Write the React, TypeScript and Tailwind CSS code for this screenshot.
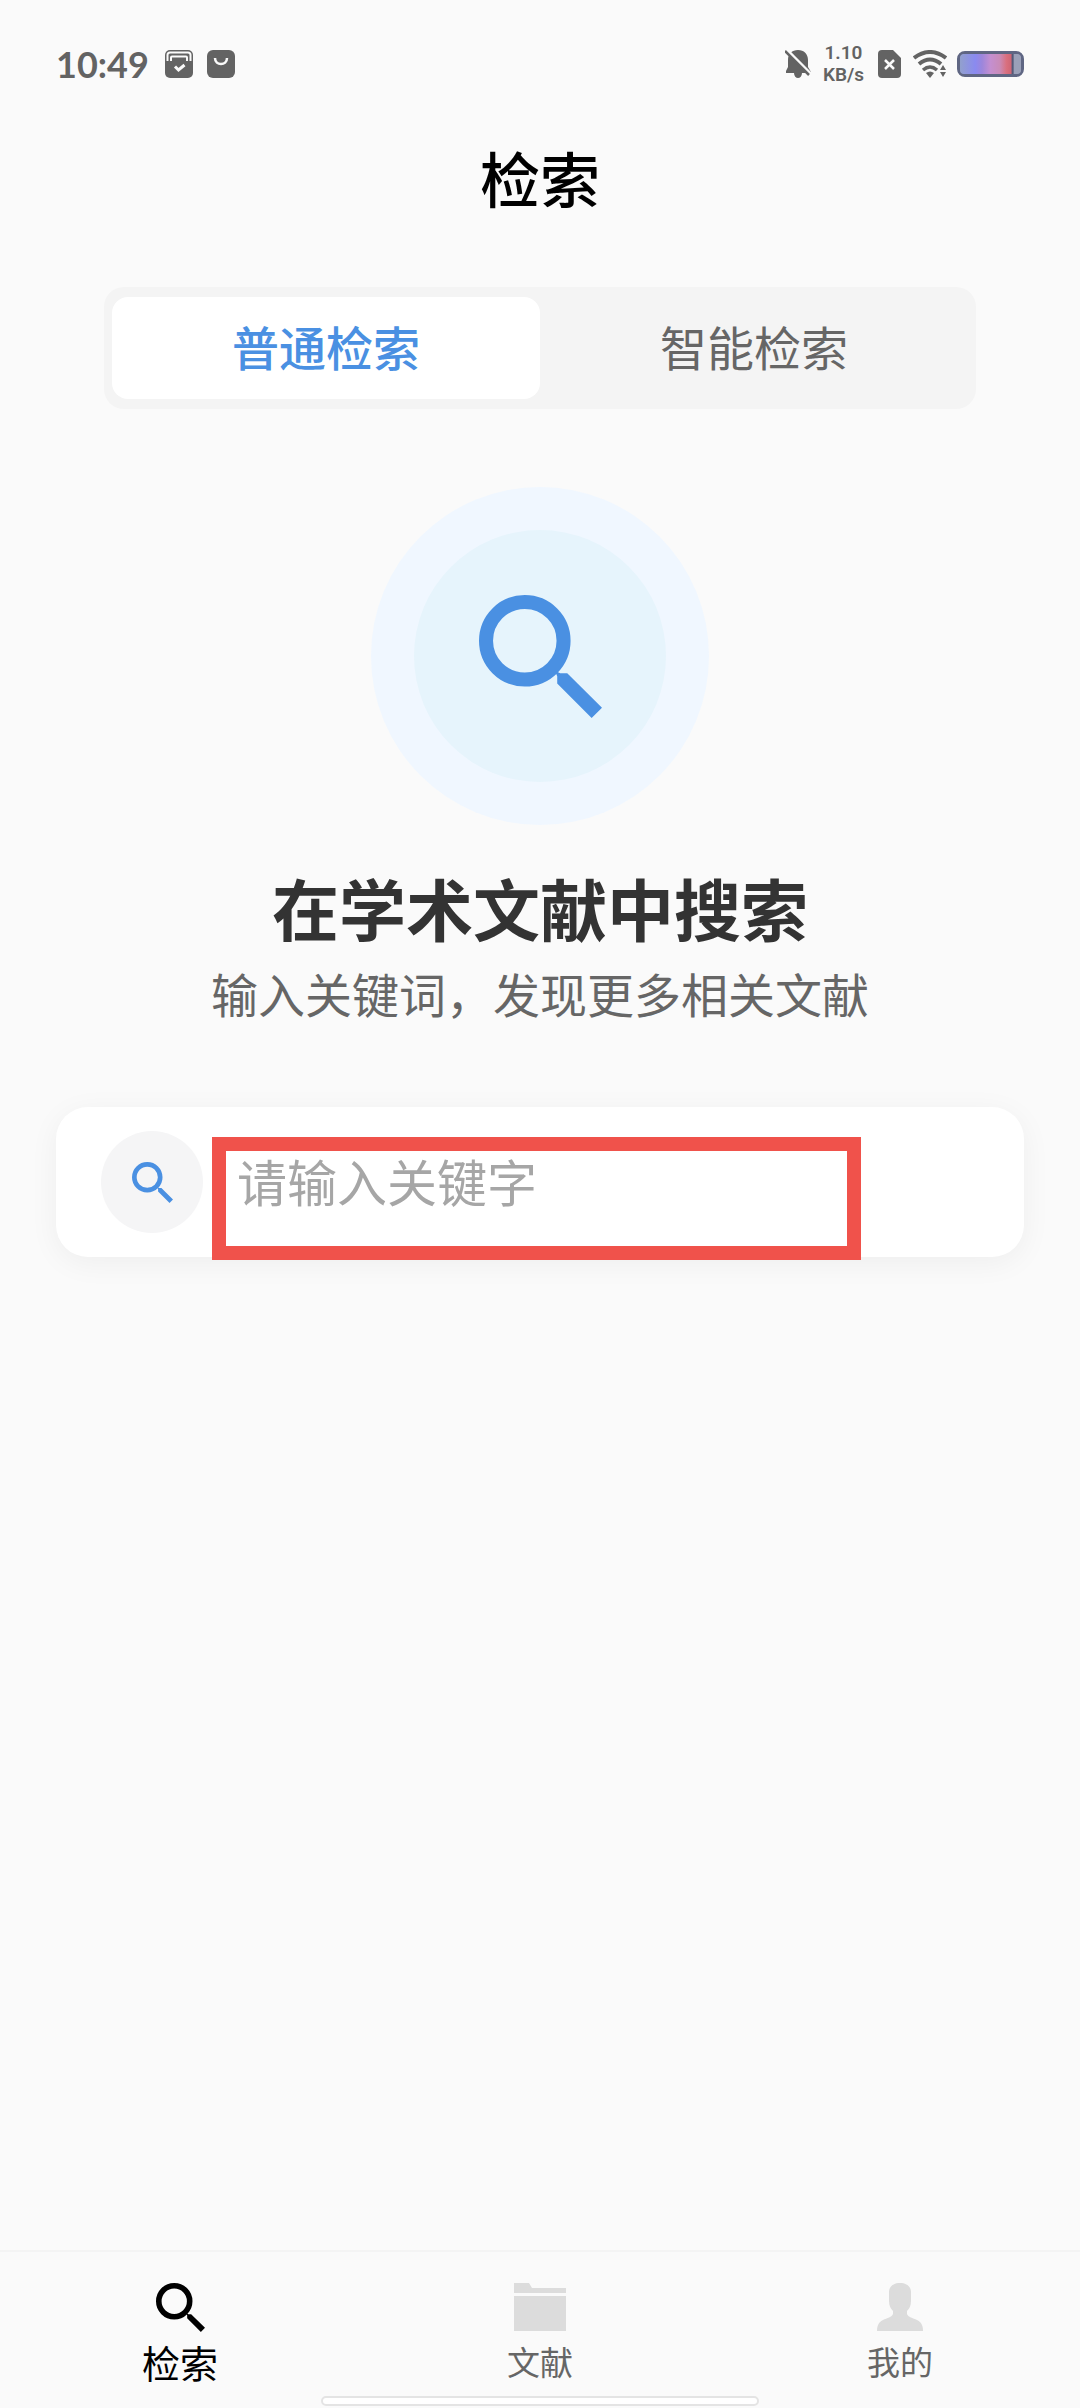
import React, { useState } from "react";

function SearchIcon({ className }: { className?: string }) {
  return (
    <svg viewBox="0 0 368 368" className={className} aria-hidden="true">
      <circle cx="137" cy="137" r="116" fill="none" stroke="currentColor" strokeWidth="42" />
      <path d="M227 227L234 243V265L337 368L368 337L264 234H243Z" fill="currentColor" />
    </svg>
  );
}

function FolderIcon({ className }: { className?: string }) {
  return (
    <svg viewBox="0 0 52 48" className={className} fill="currentColor" aria-hidden="true">
      <path d="M0 0H15L18 5H52V10H0Z" />
      <path d="M0 13H52V48H0Z" />
    </svg>
  );
}

function PersonIcon({ className }: { className?: string }) {
  return (
    <svg viewBox="0 0 46 48" className={className} fill="currentColor" aria-hidden="true">
      <path d="M23 0C30 0 34 4 34 9V18C34 23 32 26 30 28V31C31 34 36 35 40 37C44 39 46 42 46 48H0C0 42 2 39 6 37C10 35 15 34 16 31V28C14 26 12 23 12 18V9C12 4 16 0 23 0Z" />
    </svg>
  );
}

function StatusBar() {
  return (
    <header className="flex h-32 items-center justify-between px-14 text-[#636363]">
      <div className="flex items-center">
        <span className="font-['Lato',sans-serif] text-[36px] leading-10 font-bold">10:49</span>
        <svg viewBox="0 0 28 28" className="ml-4 size-7" aria-hidden="true">
          <rect width="28" height="28" rx="5" fill="currentColor" />
          <path d="M2.5 11V5Q2.500 2.500 5 2.500H23Q25.500 2.500 25.500 5V11" fill="none" stroke="#fafafa" strokeWidth="2" />
          <path d="M6 11V7.500Q6 6.500 7 6.500H21Q22 6.500 22 7.500V11" fill="none" stroke="#fafafa" strokeWidth="2" />
          <path d="M10 16.500L13.500 20L19.500 15" fill="none" stroke="#fafafa" strokeWidth="3" />
        </svg>
        <svg viewBox="0 0 28 28" className="ml-3.5 size-7" aria-hidden="true">
          <rect width="28" height="28" rx="6" fill="currentColor" />
          <path d="M8 8C8 16 20 16 20 8" fill="none" stroke="#fafafa" strokeWidth="2.500" />
        </svg>
      </div>
      <div className="flex items-center">
        <svg viewBox="0 0 26 28" className="h-7 w-[26px]" aria-hidden="true">
          <path d="M13 0C19 0 23 4 23 10V17L26 22V23H17C17 26 15 28 13 28C11 28 9 26 9 23H1V21L3 17V10C3 4 7 0 13 0Z" fill="currentColor" />
          <path d="M2 0L26 24" stroke="#fafafa" strokeWidth="3" />
          <path d="M0 1L24 25" stroke="currentColor" strokeWidth="2.500" />
        </svg>
        <div className="ml-3 flex flex-col items-center font-['Roboto',sans-serif] text-[19px] leading-[22px] font-semibold">
          <span>1.10</span>
          <span>KB/s</span>
        </div>
        <svg viewBox="0 0 23 28" className="ml-3.5 h-7 w-[23px]" aria-hidden="true">
          <path d="M4 0H15L23 8V24Q23 28 19 28H4Q0 28 0 24V4Q0 0 4 0Z" fill="currentColor" />
          <path d="M7 10L16 19M16 10L7 19" stroke="#fafafa" strokeWidth="2.500" />
        </svg>
        <svg viewBox="0 0 34 28" className="ml-3 h-7 w-[34px]" fill="none" stroke="currentColor" aria-hidden="true">
          <path d="M1 8Q17 -4 33 8" strokeWidth="4" />
          <path d="M6 14Q17 5 28 14" strokeWidth="4" />
          <path d="M10 20Q17 14 24 20" strokeWidth="3.500" />
          <path d="M13 23Q17 20 21 23L17 28Z" fill="currentColor" stroke="none" />
          <path d="M27 20L30 15L33 20ZM27 22L30 27L33 22Z" fill="currentColor" stroke="none" />
        </svg>
        <div className="ml-2.5 h-[26px] w-[67px] rounded-lg border-3 border-[#5f6683] bg-[#9aa5c6]">
          <div className="h-full w-full rounded-sm bg-[linear-gradient(90deg,#92a0cd_0%,#8a8af0_25%,#9c86dc_36%,#c48fd0_50%,#c98bb8_65%,#d9707f_76%,#cf6574_84%,#545a78_85%,#545a78_87%,#9aa0b8_89%,#9aa0b8_100%)]" />
        </div>
      </div>
    </header>
  );
}

const modes = ["普通检索", "智能检索"];

const navItems = [
  { label: "检索", Icon: SearchIcon, iconClass: "size-[49px]" },
  { label: "文献", Icon: FolderIcon, iconClass: "h-12 w-[52px]" },
  { label: "我的", Icon: PersonIcon, iconClass: "h-12 w-[46px]" },
];

export default function App() {
  const [mode, setMode] = useState(0);
  const [page, setPage] = useState(0);

  return (
    <div className="flex min-h-screen flex-col bg-[#fafafa] font-['Noto_Sans_CJK_SC',sans-serif]">
      <StatusBar />
      <h1 className="text-center text-[60px] leading-[98px] font-medium text-black">检索</h1>

      <main className="flex flex-1 flex-col px-14 pt-[61px]">
        <div role="tablist" className="mx-12 grid grid-cols-2 rounded-[20px] bg-[#f4f4f4] px-2 py-2.5">
          {modes.map((name, i) => (
            <button
              key={name}
              type="button"
              role="tab"
              aria-selected={i === mode}
              onClick={() => setMode(i)}
              className={
                i === mode
                  ? "h-[102px] rounded-2xl bg-white pb-1.5 text-[47px] leading-none font-medium text-[#4a90e2]"
                  : "h-[102px] rounded-2xl pb-1.5 text-[47px] leading-none text-[#666666]"
              }
            >
              {name}
            </button>
          ))}
        </div>

        <div className="mt-[78px] flex size-[338px] items-center justify-center self-center rounded-full bg-[#f0f7ff]">
          <div className="flex size-[252px] items-center justify-center rounded-full bg-[#e6f4fc]">
            <SearchIcon className="size-[123px] text-[#4a90e2]" />
          </div>
        </div>

        <h2 className="mt-[42px] text-center text-[67px] leading-20 font-bold text-[#333333]">在学术文献中搜索</h2>
        <p className="mt-3.5 text-center text-[47px] leading-16 text-[#666666]">输入关键词，发现更多相关文献</p>

        <div className="relative mt-[82px] flex h-[150px] items-center rounded-[32px] bg-white px-[45px] shadow-[0_6px_30px_rgba(0,0,0,0.05)]">
          <label htmlFor="keyword" aria-label="检索" className="flex size-[102px] shrink-0 items-center justify-center rounded-full bg-[#f5f5f6]">
            <SearchIcon className="size-[41px] text-[#4a90e2]" />
          </label>
          <input
            id="keyword"
            type="text"
            placeholder="请输入关键字"
            className="ml-[34px] h-20 min-w-0 flex-1 bg-transparent pb-1 text-[50px] text-[#333333] outline-none placeholder:text-[#a6a6a6]"
          />
          <div className="pointer-events-none absolute top-[30px] right-[163px] -bottom-[3px] left-[156px] border-14 border-[#f0524b]" />
        </div>
      </main>

      <nav className="relative grid grid-cols-3 border-t-2 border-[#f4f4f4] pt-[31px] pb-[22px]">
        {navItems.map(({ label, Icon, iconClass }, i) => (
          <button
            key={label}
            type="button"
            onClick={() => setPage(i)}
            aria-current={i === page ? "page" : undefined}
            className={
              i === page
                ? "flex flex-col items-center gap-1.5 text-[38px] leading-12 text-black"
                : "flex flex-col items-center gap-1.5 text-[33px] leading-12 text-[#666666]"
            }
          >
            <Icon className={i === page ? iconClass : `${iconClass} text-[#dcdcdc]`} />
            {label}
          </button>
        ))}
        <div className="absolute bottom-0.5 left-1/2 h-2.5 w-[438px] -translate-x-1/2 rounded-full border-2 border-[#e4e4e4] bg-white" />
      </nav>
    </div>
  );
}
